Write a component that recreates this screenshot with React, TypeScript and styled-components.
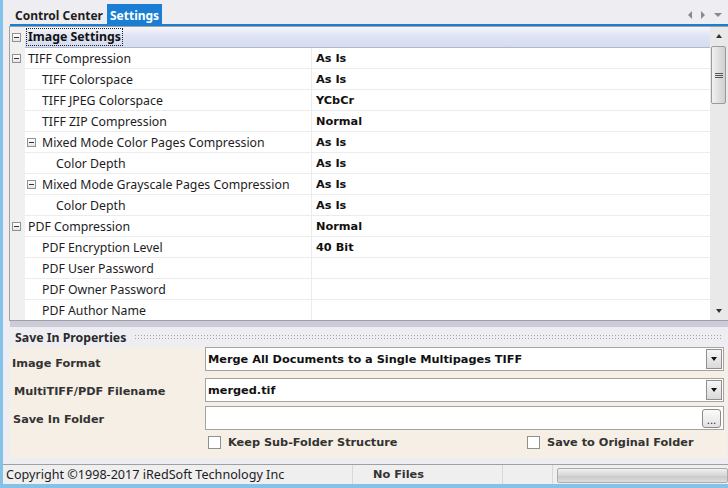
import React from 'react';
import styled, { createGlobalStyle } from 'styled-components';

const GlobalStyle = createGlobalStyle`
  html, body {
    margin: 0;
    padding: 0;
    background: #eeeef2;
  }
  body {
    font-family: "Noto Sans", sans-serif;
  }
`;

const Frame = styled.div`
  width: 728px;
  height: 488px;
  box-sizing: border-box;
  border-left: 3px solid #84c2e9;
  border-bottom: 4px solid #84c2e9;
  background: #eeeef2;
  display: flex;
  flex-direction: column;
  overflow: hidden;
`;

const TabBar = styled.div`
  height: 24px;
  flex-shrink: 0;
  margin-left: 7px;
  border-bottom: 2px solid #1a7fd4;
  display: flex;
  align-items: flex-end;
  padding-left: 2px;
`;

const Tab = styled.div<{ $active?: boolean }>`
  height: 20px;
  padding: 0 3px;
  margin-right: 1px;
  font: bold 12px "Noto Sans", sans-serif;
  line-height: 23px;
  color: ${p => (p.$active ? '#fff' : '#1e1e1e')};
  background: ${p => (p.$active ? '#1a7fd4' : 'transparent')};
`;

const TabArrows = styled.div`
  margin-left: auto;
  align-self: center;
  margin-top: 6px;
  display: flex;
  align-items: center;
  gap: 9px;
  padding-right: 6px;
`;

const Arrow = styled.span<{ $dir: 'left' | 'right' | 'down' }>`
  width: 0;
  height: 0;
  ${p =>
    p.$dir === 'left'
      ? 'border-top: 4px solid transparent; border-bottom: 4px solid transparent; border-right: 4px solid #8a8a8a;'
      : p.$dir === 'right'
      ? 'border-top: 4px solid transparent; border-bottom: 4px solid transparent; border-left: 4px solid #8a8a8a;'
      : 'border-left: 4px solid transparent; border-right: 4px solid transparent; border-top: 4px solid #8a8a8a;'}
`;

const Grid = styled.div`
  margin-left: 6px;
  height: 295px;
  flex-shrink: 0;
  box-sizing: border-box;
  border: 1px solid #a0a0a0;
  border-right: none;
  display: flex;
  background: #fff;
`;

const Rows = styled.div`
  flex: 1;
  display: flex;
  flex-direction: column;
  overflow: hidden;
`;

const Row = styled.div`
  display: flex;
  height: 21px;
  flex-shrink: 0;
`;

const MarginCell = styled.div`
  width: 15px;
  flex-shrink: 0;
  box-sizing: border-box;
  padding-left: 2px;
  background: #f0f0f0;
  display: flex;
  align-items: center;
`;

const HeaderCell = styled.div`
  flex: 1;
  box-sizing: border-box;
  padding-left: 1px;
  border-bottom: 1px solid #b3b7cd;
  background: linear-gradient(#f6f7fc, #dfe4f4 45%, #d5dcf0);
  display: flex;
  align-items: center;
`;

const HeaderLabel = styled.span`
  height: 16px;
  padding: 0 1px;
  border: 1px dotted #222;
  font: bold 12.3px "Noto Sans", sans-serif;
  line-height: 16px;
  color: #111;
`;

const NameCell = styled.div<{ $indent: number }>`
  width: 287px;
  flex-shrink: 0;
  box-sizing: border-box;
  padding-left: ${p => p.$indent}px;
  border-right: 1px solid #ececec;
  border-bottom: 1px solid #ececec;
  display: flex;
  align-items: center;
  font-size: 12.3px;
  color: #1c1c24;
  white-space: nowrap;
`;

const ValueCell = styled.div`
  flex: 1;
  box-sizing: border-box;
  padding-left: 4px;
  border-bottom: 1px solid #ececec;
  display: flex;
  align-items: center;
  font: bold 11.3px "DejaVu Sans", sans-serif;
  color: #111;
`;

const ExpandBox = styled.span<{ $gap?: number }>`
  width: 9px;
  height: 9px;
  flex-shrink: 0;
  box-sizing: border-box;
  margin-right: ${p => p.$gap ?? 0}px;
  border: 1px solid #919191;
  background: linear-gradient(#ffffff, #e6e6e6);
  position: relative;
  &::after {
    content: '';
    position: absolute;
    left: 1px;
    right: 1px;
    top: 3px;
    height: 1px;
    background: #333;
  }
`;

const Scrollbar = styled.div`
  width: 18px;
  flex-shrink: 0;
  box-sizing: border-box;
  padding: 0 2px 0 1px;
  background: #e9e9e9;
  display: flex;
  flex-direction: column;
`;

const ScrollButton = styled.div`
  height: 18px;
  flex-shrink: 0;
  display: flex;
  align-items: center;
  justify-content: center;
`;

const ScrollArrow = styled.span<{ $up?: boolean }>`
  width: 0;
  height: 0;
  border-left: 3.5px solid transparent;
  border-right: 3.5px solid transparent;
  ${p => (p.$up ? 'border-bottom: 4px solid #333;' : 'border-top: 4px solid #333;')}
`;

const Thumb = styled.div`
  height: 58px;
  margin-top: 1px;
  box-sizing: border-box;
  border: 1px solid #9a9a9a;
  border-radius: 2px;
  background: linear-gradient(90deg, #f2f2f2, #dcdcdc 60%, #cfcfcf);
  display: flex;
  flex-direction: column;
  align-items: center;
  justify-content: center;
  gap: 1px;
`;

const Grip = styled.span`
  width: 8px;
  height: 1px;
  background: #555;
`;

const Track = styled.div`
  flex: 1;
`;

const Band = styled.div`
  height: 6px;
  flex-shrink: 0;
  margin-left: 7px;
  background: #cbcbd9;
`;

const SectionHeader = styled.div`
  height: 20px;
  flex-shrink: 0;
  display: flex;
  align-items: center;
  gap: 8px;
  padding: 0 6px 0 12px;
`;

const SectionTitle = styled.span`
  font: bold 12.3px "Noto Sans", sans-serif;
  color: #2a2a2a;
  white-space: nowrap;
`;

const Dots = styled.span`
  flex: 1;
  height: 7px;
  margin-top: 1px;
  background-image: radial-gradient(circle, #a6a6a6 0.75px, transparent 0.95px);
  background-size: 3px 3px;
`;

const FormPanel = styled.div`
  height: 111px;
  flex-shrink: 0;
  margin-left: 7px;
  margin-right: 1px;
  padding-right: 3px;
  box-sizing: border-box;
  background: #f5efe6;
  display: grid;
  grid-template-columns: 195px 1fr;
  grid-template-rows: 31px 28px 29px 15px;
  align-items: start;
`;

const FieldLabel = styled.div<{ $pad: number; $top: number }>`
  padding-left: ${p => p.$pad}px;
  height: 24px;
  margin-top: ${p => p.$top}px;
  font: bold 11.3px "DejaVu Sans", sans-serif;
  line-height: 24px;
  color: #333;
  white-space: nowrap;
`;

const Combo = styled.div`
  height: 24px;
  box-sizing: border-box;
  border: 1px solid #a3a3a3;
  background: #fff;
  display: flex;
  align-items: center;
  padding-left: 2px;
  font: bold 11.3px "DejaVu Sans", sans-serif;
  color: #111;
`;

const DropButton = styled.span`
  margin-left: auto;
  margin-right: 1px;
  width: 16px;
  height: 20px;
  box-sizing: border-box;
  border: 1px solid #8f8f8f;
  background: linear-gradient(#f6f6f6, #dadada);
  display: flex;
  align-items: center;
  justify-content: center;
  &::after {
    content: '';
    border-left: 3.5px solid transparent;
    border-right: 3.5px solid transparent;
    border-top: 4px solid #111;
  }
`;

const BrowseButton = styled.span`
  margin-left: auto;
  margin-right: 2px;
  width: 19px;
  height: 19px;
  box-sizing: border-box;
  border: 1px solid #8a8a8a;
  border-radius: 3px;
  background: linear-gradient(#fbfbfb, #e2e2e2);
  font: 10px "DejaVu Sans", sans-serif;
  line-height: 13px;
  color: #222;
  display: flex;
  align-items: flex-end;
  justify-content: center;
`;

const CheckRow = styled.div`
  grid-column: 2;
  height: 15px;
  display: flex;
  align-items: center;
  padding-left: 3px;
`;

const CheckItem = styled.label<{ $width?: number }>`
  display: flex;
  align-items: center;
  gap: 7px;
  width: ${p => (p.$width ? `${p.$width}px` : 'auto')};
  font: bold 11.3px "DejaVu Sans", sans-serif;
  color: #333;
  white-space: nowrap;
`;

const CheckBox = styled.span`
  width: 13px;
  height: 13px;
  box-sizing: border-box;
  border: 1px solid #8e8f8f;
  background: #fff;
`;

const StatusBar = styled.div`
  height: 20px;
  flex-shrink: 0;
  margin-top: 6px;
  box-sizing: border-box;
  border-top: 1px solid #a0a0a0;
  background: #f0efef;
  display: flex;
`;

const StatusCell = styled.div<{ $width: number; $pad: number; $bold?: boolean }>`
  width: ${p => p.$width}px;
  flex-shrink: 0;
  box-sizing: border-box;
  padding-left: ${p => p.$pad}px;
  border-right: 1px solid #d8d8d8;
  display: flex;
  align-items: center;
  white-space: nowrap;
  font: ${p => (p.$bold ? 'bold 11.3px "DejaVu Sans"' : '12.6px "Noto Sans"')}, sans-serif;
  color: ${p => (p.$bold ? '#333' : '#1c1c24')};
`;

const Progress = styled.div`
  flex: 1;
  margin: 3px 0 1px 4px;
  box-sizing: border-box;
  border: 1px solid #ababab;
  border-radius: 2px;
  background: linear-gradient(#f0f0f0, #d6d6d6 50%, #cacaca 60%, #dedede);
`;

interface PropRow {
  label: string;
  level: number;
  box?: boolean;
  value?: string;
}

const rows: PropRow[] = [
  { label: 'TIFF Compression', level: 0, box: true, value: 'As Is' },
  { label: 'TIFF Colorspace', level: 1, value: 'As Is' },
  { label: 'TIFF JPEG Colorspace', level: 1, value: 'YCbCr' },
  { label: 'TIFF ZIP Compression', level: 1, value: 'Normal' },
  { label: 'Mixed Mode Color Pages Compression', level: 1, box: true, value: 'As Is' },
  { label: 'Color Depth', level: 2, value: 'As Is' },
  { label: 'Mixed Mode Grayscale Pages Compression', level: 1, box: true, value: 'As Is' },
  { label: 'Color Depth', level: 2, value: 'As Is' },
  { label: 'PDF Compression', level: 0, box: true, value: 'Normal' },
  { label: 'PDF Encryption Level', level: 1, value: '40 Bit' },
  { label: 'PDF User Password', level: 1 },
  { label: 'PDF Owner Password', level: 1 },
  { label: 'PDF Author Name', level: 1 },
];

const PropertyRow: React.FC<{ row: PropRow }> = ({ row }) => {
  const inlineBox = row.box && row.level > 0;
  const indent = 3 + 14 * row.level - (inlineBox ? 15 : 0);
  return (
    <Row>
      <MarginCell>{row.box && row.level === 0 && <ExpandBox />}</MarginCell>
      <NameCell $indent={indent}>
        {inlineBox && <ExpandBox $gap={6} />}
        {row.label}
      </NameCell>
      <ValueCell>{row.value}</ValueCell>
    </Row>
  );
};

const App: React.FC = () => {
  return (
    <>
      <GlobalStyle />
      <Frame>
        <TabBar>
          <Tab>Control Center</Tab>
          <Tab $active>Settings</Tab>
          <TabArrows>
            <Arrow $dir="left" />
            <Arrow $dir="right" />
            <Arrow $dir="down" />
          </TabArrows>
        </TabBar>

        <Grid>
          <Rows>
            <Row>
              <MarginCell>
                <ExpandBox />
              </MarginCell>
              <HeaderCell>
                <HeaderLabel>Image Settings</HeaderLabel>
              </HeaderCell>
            </Row>
            {rows.map((r, i) => (
              <PropertyRow key={i} row={r} />
            ))}
          </Rows>
          <Scrollbar>
            <ScrollButton>
              <ScrollArrow $up />
            </ScrollButton>
            <Thumb>
              <Grip />
              <Grip />
              <Grip />
            </Thumb>
            <Track />
            <ScrollButton>
              <ScrollArrow />
            </ScrollButton>
          </Scrollbar>
        </Grid>
        <Band />

        <SectionHeader>
          <SectionTitle>Save In Properties</SectionTitle>
          <Dots />
        </SectionHeader>

        <FormPanel>
          <FieldLabel $pad={2} $top={5}>Image Format</FieldLabel>
          <Combo>
            Merge All Documents to a Single Multipages TIFF
            <DropButton />
          </Combo>
          <FieldLabel $pad={4} $top={2}>MultiTIFF/PDF Filename</FieldLabel>
          <Combo>
            merged.tif
            <DropButton />
          </Combo>
          <FieldLabel $pad={3} $top={2}>Save In Folder</FieldLabel>
          <Combo>
            <BrowseButton>...</BrowseButton>
          </Combo>
          <CheckRow>
            <CheckItem $width={319}>
              <CheckBox />
              Keep Sub-Folder Structure
            </CheckItem>
            <CheckItem>
              <CheckBox />
              Save to Original Folder
            </CheckItem>
          </CheckRow>
        </FormPanel>

        <StatusBar>
          <StatusCell $width={350} $pad={3}>
            Copyright ©1998-2017 iRedSoft Technology Inc
          </StatusCell>
          <StatusCell $width={150} $pad={20} $bold>
            No Files
          </StatusCell>
          <StatusCell $width={50} $pad={0} />
          <Progress />
        </StatusBar>
      </Frame>
    </>
  );
};

export default App;
